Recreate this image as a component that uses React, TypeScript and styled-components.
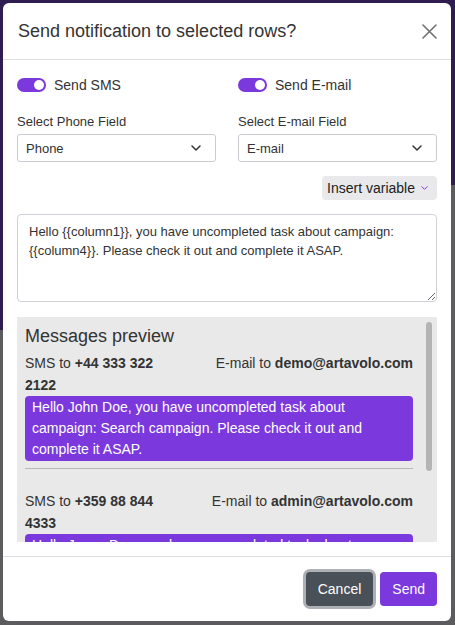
import styled, { createGlobalStyle } from "styled-components";

const purple = "#7b38dc";
const textColor = "#333";

const GlobalStyle = createGlobalStyle`
  html, body {
    margin: 0;
    padding: 0;
  }
  body {
    font-family: "Liberation Sans", Arial, sans-serif;
    color: ${textColor};
  }
  * {
    box-sizing: border-box;
  }
`;

const Backdrop = styled.div`
  width: 455px;
  height: 625px;
  padding: 3px 4px 4px 3px;
  background:
    linear-gradient(#2f1c50, #2f1c50) left top / 3px 330px no-repeat,
    linear-gradient(to bottom, #2f1c50 0 185px, #5c5c5e 185px);
`;

const Modal = styled.div`
  width: 448px;
  height: 618px;
  background: #fff;
  border-radius: 6px;
  display: flex;
  flex-direction: column;
  overflow: hidden;
`;

const Header = styled.div`
  height: 57px;
  flex-shrink: 0;
  display: flex;
  align-items: center;
  justify-content: space-between;
  padding: 0 14px 0 15px;
  border-bottom: 1px solid #dcdfe3;
`;

const Title = styled.h5`
  margin: 0;
  font-size: 18px;
  font-weight: 400;
  color: ${textColor};
`;

const CloseButton = styled.button`
  border: none;
  background: none;
  padding: 0;
  width: 15px;
  height: 15px;
  display: flex;
  cursor: pointer;
`;

const Body = styled.div`
  flex: 1;
  min-height: 0;
  padding: 15px 14px 14px;
  display: flex;
  flex-direction: column;
`;

const TwoCols = styled.div<{ $top?: number }>`
  display: grid;
  grid-template-columns: 1fr 1fr;
  column-gap: 22px;
  margin-top: ${(p) => p.$top ?? 0}px;
`;

const ToggleItem = styled.label`
  display: flex;
  align-items: center;
  gap: 8px;
  height: 20px;
  font-size: 14px;
`;

const Switch = styled.span<{ $on: boolean }>`
  position: relative;
  width: 29px;
  height: 14px;
  border-radius: 7px;
  background: ${(p) => (p.$on ? purple : "#ccc")};
  &:after {
    content: "";
    position: absolute;
    top: 2px;
    ${(p) => (p.$on ? "right: 2px;" : "left: 2px;")}
    width: 10px;
    height: 10px;
    border-radius: 50%;
    background: #fff;
  }
`;

const Field = styled.div`
  display: flex;
  flex-direction: column;
`;

const FieldLabel = styled.span`
  font-size: 13px;
  line-height: 16px;
  margin-bottom: 4px;
`;

const SelectBox = styled.div`
  height: 28px;
  border: 1px solid #c9cdd2;
  border-radius: 3px;
  padding: 0 14px 0 8px;
  display: flex;
  align-items: center;
  justify-content: space-between;
  font-size: 13px;
`;

const InsertRow = styled.div`
  display: flex;
  justify-content: flex-end;
  margin-top: 14px;
`;

const InsertButton = styled.button`
  height: 24px;
  border: none;
  border-radius: 4px;
  background: #e9e9eb;
  padding: 0 9px 0 5px;
  display: flex;
  align-items: center;
  gap: 6px;
  font-family: inherit;
  font-size: 14px;
  color: #222;
`;

const MessageInput = styled.textarea`
  margin-top: 14px;
  width: 100%;
  height: 88px;
  flex-shrink: 0;
  padding: 7px 11px;
  border: 1px solid #cdd1d6;
  border-radius: 4px;
  font-family: inherit;
  font-size: 13px;
  line-height: 19px;
  color: ${textColor};
  resize: vertical;
`;

const Preview = styled.div`
  margin-top: 15px;
  height: 225px;
  flex-shrink: 0;
  background: #e9e9e9;
  display: flex;
`;

const PreviewContent = styled.div`
  flex: 1;
  min-width: 0;
  padding: 8px;
  overflow: hidden;
`;

const ScrollTrack = styled.div`
  width: 16px;
  padding: 5px;
  flex-shrink: 0;
`;

const ScrollThumb = styled.div`
  height: 149px;
  border-radius: 3px;
  background: #b4b4b4;
`;

const PreviewTitle = styled.h4`
  margin: 0 0 5px;
  font-size: 18px;
  line-height: 22px;
  font-weight: 400;
`;

const MetaRow = styled.div`
  display: flex;
  justify-content: space-between;
  gap: 40px;
  font-size: 14px;
  line-height: 22px;
`;

const MetaLeft = styled.div`
  flex: 1;
  min-width: 0;
`;

const MetaRight = styled.div`
  white-space: nowrap;
  text-align: right;
`;

const Bubble = styled.div`
  background: ${purple};
  color: #fff;
  border-radius: 4px;
  padding: 1px 7px;
  font-size: 14px;
  line-height: 21px;
`;

const Divider = styled.hr`
  border: none;
  border-top: 1px solid #b9b9b9;
  margin: 7px 0 21px;
`;

const Footer = styled.div`
  flex-shrink: 0;
  border-top: 1px solid #dcdfe3;
  padding: 15px 14px;
  display: flex;
  justify-content: flex-end;
  gap: 7px;
`;

const Button = styled.button<{ $variant: "cancel" | "send" }>`
  height: 34px;
  border: none;
  border-radius: 4px;
  padding: 0 12px;
  font-family: inherit;
  font-size: 14px;
  color: #fff;
  background: ${(p) => (p.$variant === "cancel" ? "#495057" : purple)};
  box-shadow: ${(p) =>
    p.$variant === "cancel" ? "0 0 0 3px #adb1b6" : "none"};
`;

const Chevron = ({ color, w, h }: { color: string; w: number; h: number }) => (
  <svg width={w} height={h} viewBox="0 0 10 6" fill="none">
    <path
      d="M1 1l4 4 4-4"
      stroke={color}
      strokeWidth="1.5"
      strokeLinecap="round"
      strokeLinejoin="round"
    />
  </svg>
);

const messages = [
  {
    phone: "+44 333 322 2122",
    email: "demo@artavolo.com",
    text: "Hello John Doe, you have uncompleted task about campaign: Search campaign. Please check it out and complete it ASAP.",
  },
  {
    phone: "+359 88 844 4333",
    email: "admin@artavolo.com",
    text: "Hello Jason Doe, you have uncompleted task about campaign: Search campaign. Please check it out and complete it ASAP.",
  },
];

const App = () => {
  return (
    <Backdrop>
      <GlobalStyle />
      <Modal>
        <Header>
          <Title>Send notification to selected rows?</Title>
          <CloseButton aria-label="Close">
            <svg width="15" height="15" viewBox="0 0 15 15">
              <path
                d="M1 1l13 13M14 1L1 14"
                stroke="#707070"
                strokeWidth="1.6"
                strokeLinecap="round"
              />
            </svg>
          </CloseButton>
        </Header>
        <Body>
          <TwoCols>
            <ToggleItem>
              <Switch $on />
              Send SMS
            </ToggleItem>
            <ToggleItem>
              <Switch $on />
              Send E-mail
            </ToggleItem>
          </TwoCols>
          <TwoCols $top={19}>
            <Field>
              <FieldLabel>Select Phone Field</FieldLabel>
              <SelectBox>
                Phone
                <Chevron color="#333" w={10} h={6} />
              </SelectBox>
            </Field>
            <Field>
              <FieldLabel>Select E-mail Field</FieldLabel>
              <SelectBox>
                E-mail
                <Chevron color="#333" w={10} h={6} />
              </SelectBox>
            </Field>
          </TwoCols>
          <InsertRow>
            <InsertButton>
              Insert variable
              <Chevron color={purple} w={7} h={4} />
            </InsertButton>
          </InsertRow>
          <MessageInput defaultValue="Hello {{column1}}, you have uncompleted task about campaign: {{column4}}. Please check it out and complete it ASAP." />
          <Preview>
            <PreviewContent>
              <PreviewTitle>Messages preview</PreviewTitle>
              {messages.map((m, i) => (
                <div key={m.phone}>
                  <MetaRow>
                    <MetaLeft>
                      SMS to <b>{m.phone}</b>
                    </MetaLeft>
                    <MetaRight>
                      E-mail to <b>{m.email}</b>
                    </MetaRight>
                  </MetaRow>
                  <Bubble>{m.text}</Bubble>
                  {i < messages.length - 1 && <Divider />}
                </div>
              ))}
            </PreviewContent>
            <ScrollTrack>
              <ScrollThumb />
            </ScrollTrack>
          </Preview>
        </Body>
        <Footer>
          <Button $variant="cancel">Cancel</Button>
          <Button $variant="send">Send</Button>
        </Footer>
      </Modal>
    </Backdrop>
  );
};

export default App;
